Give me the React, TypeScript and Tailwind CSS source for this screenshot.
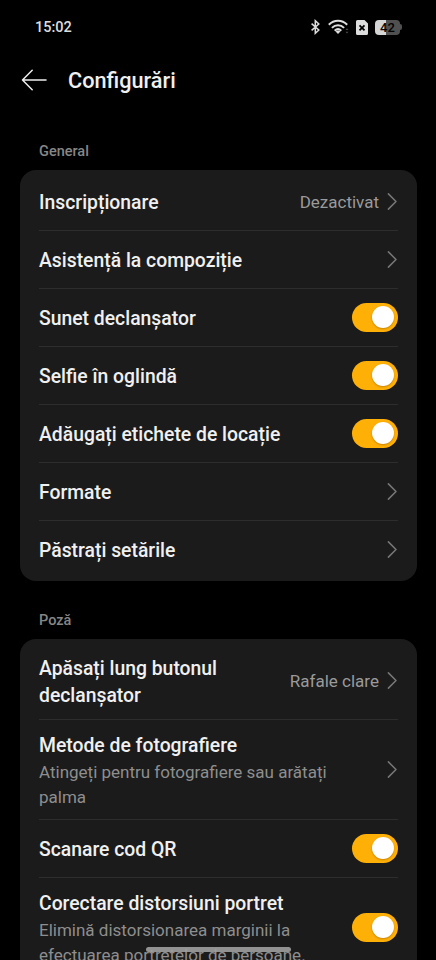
import React, { useState } from 'react';

/**
 * One line of a settings card
 * @property lines - Title of the setting, split where it wraps
 * @property details - Optional description lines under the title
 * @property value - Current value, shown before the chevron
 * @property toggle - Whether the row ends in a switch instead of a chevron
 */
interface Setting {
  id: string;
  lines: string[];
  details?: string[];
  value?: string;
  toggle?: boolean;
  height: string;
}

const generalSettings: Setting[] = [
  { id: 'watermark', lines: ['Inscripționare'], value: 'Dezactivat', height: 'h-[58px]' },
  { id: 'composition', lines: ['Asistență la compoziție'], height: 'h-[58px]' },
  { id: 'sound', lines: ['Sunet declanșator'], toggle: true, height: 'h-[58px]' },
  { id: 'mirror', lines: ['Selfie în oglindă'], toggle: true, height: 'h-[58px]' },
  { id: 'location', lines: ['Adăugați etichete de locație'], toggle: true, height: 'h-[58px]' },
  { id: 'formats', lines: ['Formate'], height: 'h-[58px]' },
  { id: 'keep', lines: ['Păstrați setările'], height: 'h-[58px]' },
];

const photoSettings: Setting[] = [
  { id: 'burst', lines: ['Apăsați lung butonul', 'declanșator'], value: 'Rafale clare', height: 'h-[78px]' },
  {
    id: 'methods',
    lines: ['Metode de fotografiere'],
    details: ['Atingeți pentru fotografiere sau arătați', 'palma'],
    height: 'h-[100px]',
  },
  { id: 'qr', lines: ['Scanare cod QR'], toggle: true, height: 'h-[58px]' },
  {
    id: 'distortion',
    lines: ['Corectare distorsiuni portret'],
    details: ['Elimină distorsionarea marginii la', 'efectuarea portretelor de persoane.'],
    toggle: true,
    height: 'h-[100px]',
  },
];

const Chevron: React.FC = () => (
  <svg className="ml-[8px] h-[18px] w-[11px] shrink-0" viewBox="0 0 11 18" fill="none">
    <path d="M1.4.9 9 8.500l-7.600 7.600" stroke="#777777" strokeWidth="1.5" strokeLinecap="round" strokeLinejoin="round" />
  </svg>
);

/**
 * Yellow switch that keeps its own state
 */
const Toggle: React.FC<{ label: string }> = ({ label }) => {
  const [on, setOn] = useState(true);

  return (
    <button
      type="button"
      role="switch"
      aria-checked={on}
      aria-label={label}
      onClick={() => setOn(prev => !prev)}
      className={`flex h-[29px] w-[46px] shrink-0 items-center rounded-full px-[4px] ${
        on ? 'justify-end bg-[#ffb006]' : 'justify-start bg-[#4a4a4a]'
      }`}
    >
      <span className="mb-px size-[22px] rounded-full bg-white shadow-[0_1px_2px_rgba(90,50,0,0.35)]" />
    </button>
  );
};

const SettingRow: React.FC<{ setting: Setting }> = ({ setting }) => (
  <div
    className={`flex items-center justify-between border-b border-[#2d2d2d] last:border-transparent ${setting.height}`}
  >
    <div className="pt-[2px] whitespace-nowrap">
      {setting.lines.map(line => (
        <p key={line} className="text-[19.35px] leading-[27px] font-medium text-[#f0f0f0]">
          {line}
        </p>
      ))}
      {setting.details && (
        <div className="-mb-px pt-px">
          {setting.details.map(line => (
            <p key={line} className="text-[17px] leading-[25px] text-[#8e8e8e]">
              {line}
            </p>
          ))}
        </div>
      )}
    </div>
    <div className="flex items-center">
      {setting.value && <span className="pt-px text-[17px] leading-[25px] text-[#9a9a9a]">{setting.value}</span>}
      {setting.toggle ? <Toggle label={setting.lines.join(' ')} /> : <Chevron />}
    </div>
  </div>
);

const SettingsCard: React.FC<{ settings: Setting[] }> = ({ settings }) => (
  <section className="mr-[19px] ml-[20px] rounded-[16px] bg-[#1b1b1b] pt-[3px] pr-[19px] pb-[2px] pl-[19px]">
    {settings.map(setting => (
      <SettingRow key={setting.id} setting={setting} />
    ))}
  </section>
);

const StatusBar: React.FC = () => (
  <div className="flex h-[54px] items-center justify-between pr-[34px] pl-[35px]">
    <span className="pt-px text-[14.5px] leading-5 font-medium text-[#dddddd]">15:02</span>
    <div className="flex items-center">
      <svg className="h-[16px] w-[11px]" viewBox="0 0 11 16" fill="none">
        <path d="m1.6 4.6 7.200 6.400-3.500 3.300V1.700L8.800 5l-7.200 6.400" stroke="#dddddd" strokeWidth="1.5" />
      </svg>
      {/* Wi-Fi arcs with the faint traffic arrows */}
      <svg className="ml-[7px] h-[16px] w-[22px]" viewBox="0 0 22 16" fill="none">
        <g stroke="#dddddd" strokeWidth="2">
          <path d="M.8 5.700C6 .4 14 .4 19.200 5.700" />
          <path d="M3.900 8.900c3.500-3.500 8.700-3.500 12.200 0" />
          <path d="M6.700 11.800c2-2 4.600-2 6.600 0" />
        </g>
        <path d="M7.600 12.500a3.600 3.600 0 0 1 4.800 0L10 14.900z" fill="#dddddd" />
        <path d="m17.500 11 1.500-1.800 1.500 1.800zM17.500 12.800l1.500 1.800 1.500-1.800z" fill="#4a4a4a" />
      </svg>
      <svg className="ml-[6px] h-[15px] w-[12px]" viewBox="0 0 12 15" fill="none">
        <path d="M1.500 0H8.500L12 3.500v10a1.500 1.500 0 0 1-1.500 1.500h-9A1.500 1.500 0 0 1 0 13.500v-12A1.500 1.500 0 0 1 1.500 0z" fill="#dddddd" />
        <path d="m3.500 5.400 5 5m0-5-5 5" stroke="#000000" strokeWidth="1.800" />
      </svg>
      <div className="ml-[7px] flex items-center">
        <div className="flex h-[15px] w-[25px] items-center justify-center rounded-[4px] bg-linear-to-r from-[#d5d5d5] from-44% to-[#505050] to-44%">
          <span className="pt-px text-[13px] leading-[14px] font-medium text-black">42</span>
        </div>
        <span className="h-[6px] w-[2px] rounded-r-full bg-[#505050]" />
      </div>
    </div>
  </div>
);

/**
 * Camera settings screen
 */
export default function App() {
  return (
    <div className="relative h-[960px] w-[436px] overflow-hidden bg-black font-[Roboto,'Noto_Sans',sans-serif]">
      <StatusBar />
      <header className="flex h-[54px] items-center pl-[21px]">
        <svg className="mb-[2px] h-[22px] w-[26px]" viewBox="0 0 26 22" fill="none">
          <path d="M11.200 1.300 1.500 11l9.700 9.700M1.500 11H25" stroke="#eeeeee" strokeWidth="1.500" strokeLinecap="round" strokeLinejoin="round" />
        </svg>
        <h1 className="ml-[21px] text-[21.7px] leading-7 font-medium text-[#f0f0f0]">Configurări</h1>
      </header>

      <h2 className="mt-[34px] pl-[39px] text-[14.5px] leading-5 font-medium text-[#868686]">General</h2>
      <div className="mt-[8px]">
        <SettingsCard settings={generalSettings} />
      </div>
      <h2 className="mt-[30px] pl-[39px] text-[14.5px] leading-5 font-medium text-[#868686]">Poză</h2>
      <div className="mt-[8px]">
        <SettingsCard settings={photoSettings} />
      </div>

      {/* Gesture bar over the list */}
      <div className="absolute top-[947px] left-[146px] h-[5px] w-[145px] rounded-full bg-[#a0a0a0]/90" />
    </div>
  );
}
